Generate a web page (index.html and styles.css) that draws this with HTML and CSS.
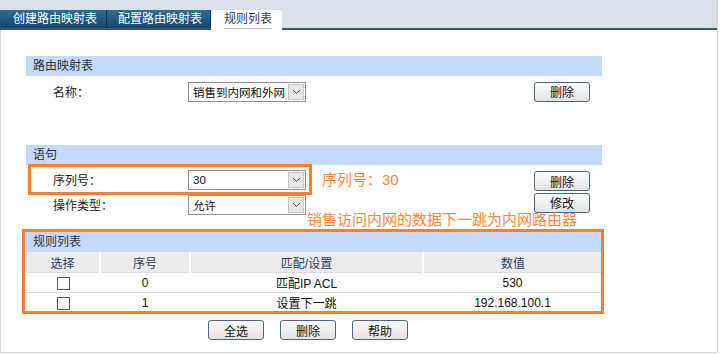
FILE: index.html
```html
<!DOCTYPE html>
<html lang="zh-CN">
<head>
    <meta charset="UTF-8">
    <meta name="viewport" content="width=device-width, initial-scale=1.0">
    <title>规则列表</title>
    <link rel="stylesheet" href="styles.css">
</head>
<body>
    <div class="frame">
        <div class="tabbar">
            <div class="tab t1">创建路由映射表</div>
            <div class="tab t2">配置路由映射表</div>
            <div class="tab active"><span>规则列表</span></div>
        </div>

        <div class="content">
            <div class="section">
                <div class="sec-head">路由映射表</div>
                <div class="form-row first">
                    <span class="label">名称：</span>
                    <div class="select"><span class="val">销售到内网和外网</span><span class="arrow"><svg width="9" height="6" viewBox="0 0 9 6"><path d="M1 1l3.5 3.5L8 1" fill="none" stroke="#555" stroke-width="1"/></svg></span></div>
                    <button class="btn">删除</button>
                </div>
            </div>

            <div class="section sec2">
                <div class="sec-head">语句</div>
                <div class="rows">
                    <div class="form-row">
                        <span class="label">序列号：</span>
                        <div class="select"><span class="val">30</span><span class="arrow"><svg width="9" height="6" viewBox="0 0 9 6"><path d="M1 1l3.5 3.5L8 1" fill="none" stroke="#555" stroke-width="1"/></svg></span></div>
                        <button class="btn low">删除</button>
                        <div class="mark mark-seq"></div>
                        <span class="note note-seq">序列号：30</span>
                    </div>
                    <div class="form-row">
                        <span class="label">操作类型：</span>
                        <div class="select"><span class="val">允许</span><span class="arrow"><svg width="9" height="6" viewBox="0 0 9 6"><path d="M1 1l3.5 3.5L8 1" fill="none" stroke="#555" stroke-width="1"/></svg></span></div>
                        <button class="btn high">修改</button>
                    </div>
                    <span class="note note-hop">销售访问内网的数据下一跳为内网路由器</span>
                </div>
            </div>

            <div class="section sec3">
                <div class="sec-head">规则列表</div>
                <table class="rules">
                    <colgroup>
                        <col style="width: 74px">
                        <col style="width: 90px">
                        <col style="width: 233px">
                        <col>
                    </colgroup>
                    <tr>
                        <th>选择</th>
                        <th>序号</th>
                        <th>匹配/设置</th>
                        <th>数值</th>
                    </tr>
                    <tr>
                        <td><span class="check"></span></td>
                        <td>0</td>
                        <td>匹配IP ACL</td>
                        <td>530</td>
                    </tr>
                    <tr>
                        <td><span class="check"></span></td>
                        <td>1</td>
                        <td>设置下一跳</td>
                        <td>192.168.100.1</td>
                    </tr>
                </table>
                <div class="mark mark-list"></div>
            </div>

            <div class="actions">
                <button class="btn">全选</button>
                <button class="btn">删除</button>
                <button class="btn">帮助</button>
            </div>
        </div>
    </div>
</body>
</html>
```

FILE: styles.css
```css
body {
    margin: 0;
    padding: 0;
    background: #fff;
    font-family: "Liberation Sans", "Noto Sans CJK SC", sans-serif;
    font-size: 12px;
    color: #222;
}
.frame {
    width: 718px;
    height: 353px;
    box-sizing: border-box;
    border-left: 1px solid #d4d4d4;
    border-right: 1px solid #d4d4d4;
    border-bottom: 1px solid #d4d4d4;
}
.tabbar {
    height: 28px;
    background: #d8e0ea;
    border-bottom: 2px solid #3d5a70;
    display: flex;
    align-items: flex-end;
    margin-left: -1px;
}
.tab {
    height: 18px;
    line-height: 18px;
    padding-left: 13px;
    box-sizing: border-box;
    color: #fff;
    font-size: 12px;
    white-space: nowrap;
    background: linear-gradient(#2b6d9b, #18476c);
    border-right: 1px solid #0f3552;
}
.t1 {
    width: 107px;
}
.t2 {
    width: 104px;
    padding-left: 11px;
}
.tab.active {
    width: 71px;
    height: 20px;
    margin-bottom: -2px;
    line-height: 19px;
    background: #fff;
    color: #2d3d72;
    border-right: none;
    border-radius: 2px 2px 0 0;
}
.tab.active span {
    display: inline-block;
    line-height: 17px;
    border-bottom: 1px solid #b4bccb;
}
.content {
    padding: 26px 0 0 25px;
}
.section {
    width: 576px;
    position: relative;
}
.sec-head {
    height: 20px;
    line-height: 20px;
    background: #c4d9fd;
    padding-left: 7px;
    color: #333;
}
.form-row {
    display: grid;
    grid-template-columns: 135px 346px 56px;
    align-items: center;
    padding-left: 27px;
    height: 25px;
    position: relative;
}
.form-row.first {
    margin-top: 3px;
}
.label {
    color: #222;
}
.select {
    width: 118px;
    height: 20px;
    box-sizing: border-box;
    border: 1px solid #8a96a3;
    background: #fff;
    display: flex;
    align-items: center;
    justify-content: space-between;
    overflow: hidden;
}
.select .val {
    padding-left: 4px;
    color: #111;
    font-size: 11.5px;
    white-space: nowrap;
}
.select .arrow {
    flex: none;
    width: 16px;
    height: 16px;
    margin-right: 1px;
    background: #e7e7e7;
    border: 1px solid #c8c8c8;
    box-sizing: border-box;
    display: flex;
    align-items: center;
    justify-content: center;
}
.btn {
    width: 56px;
    height: 20px;
    padding: 0;
    border: 1px solid #46698a;
    border-radius: 3px;
    background: linear-gradient(#fdfdfd, #e2e2e2);
    font-family: "Liberation Sans", "Noto Sans CJK SC", sans-serif;
    font-size: 12px;
    color: #111;
    cursor: pointer;
}
.btn.low {
    margin-top: 3px;
}
.btn.high {
    margin-top: -4px;
}
.sec2 {
    margin-top: 41px;
}
.rows {
    position: relative;
    padding-top: 2px;
}
.mark {
    position: absolute;
    border: 3px solid #f77f2f;
    box-sizing: border-box;
}
.mark-seq {
    left: 2px;
    top: -3px;
    width: 284px;
    height: 31px;
}
.note {
    position: absolute;
    color: #f7893a;
    font-size: 15px;
    line-height: 17px;
    white-space: nowrap;
}
.note-seq {
    left: 296px;
    top: 4px;
}
.note-hop {
    left: 281px;
    top: 46px;
}
.sec3 {
    margin-top: 15px;
}
.rules {
    width: 100%;
    border-collapse: collapse;
    table-layout: fixed;
}
.rules th {
    height: 20px;
    padding: 0;
    background: #ebebeb;
    color: #2d3d66;
    font-weight: normal;
    border-left: 2px solid #fff;
}
.rules th:first-child {
    border-left: none;
}
.rules td {
    height: 19px;
    padding: 0;
    text-align: center;
    border-top: 1px solid #dcdcdc;
    color: #111;
}
.check {
    display: inline-block;
    width: 11px;
    height: 11px;
    border: 1px solid #555;
    vertical-align: middle;
}
.mark-list {
    left: -4px;
    right: -2px;
    top: -3px;
    bottom: -2px;
}
.actions {
    width: 576px;
    display: flex;
    justify-content: center;
    gap: 16px;
    padding-right: 12px;
    box-sizing: border-box;
    margin-top: 8px;
}
```
